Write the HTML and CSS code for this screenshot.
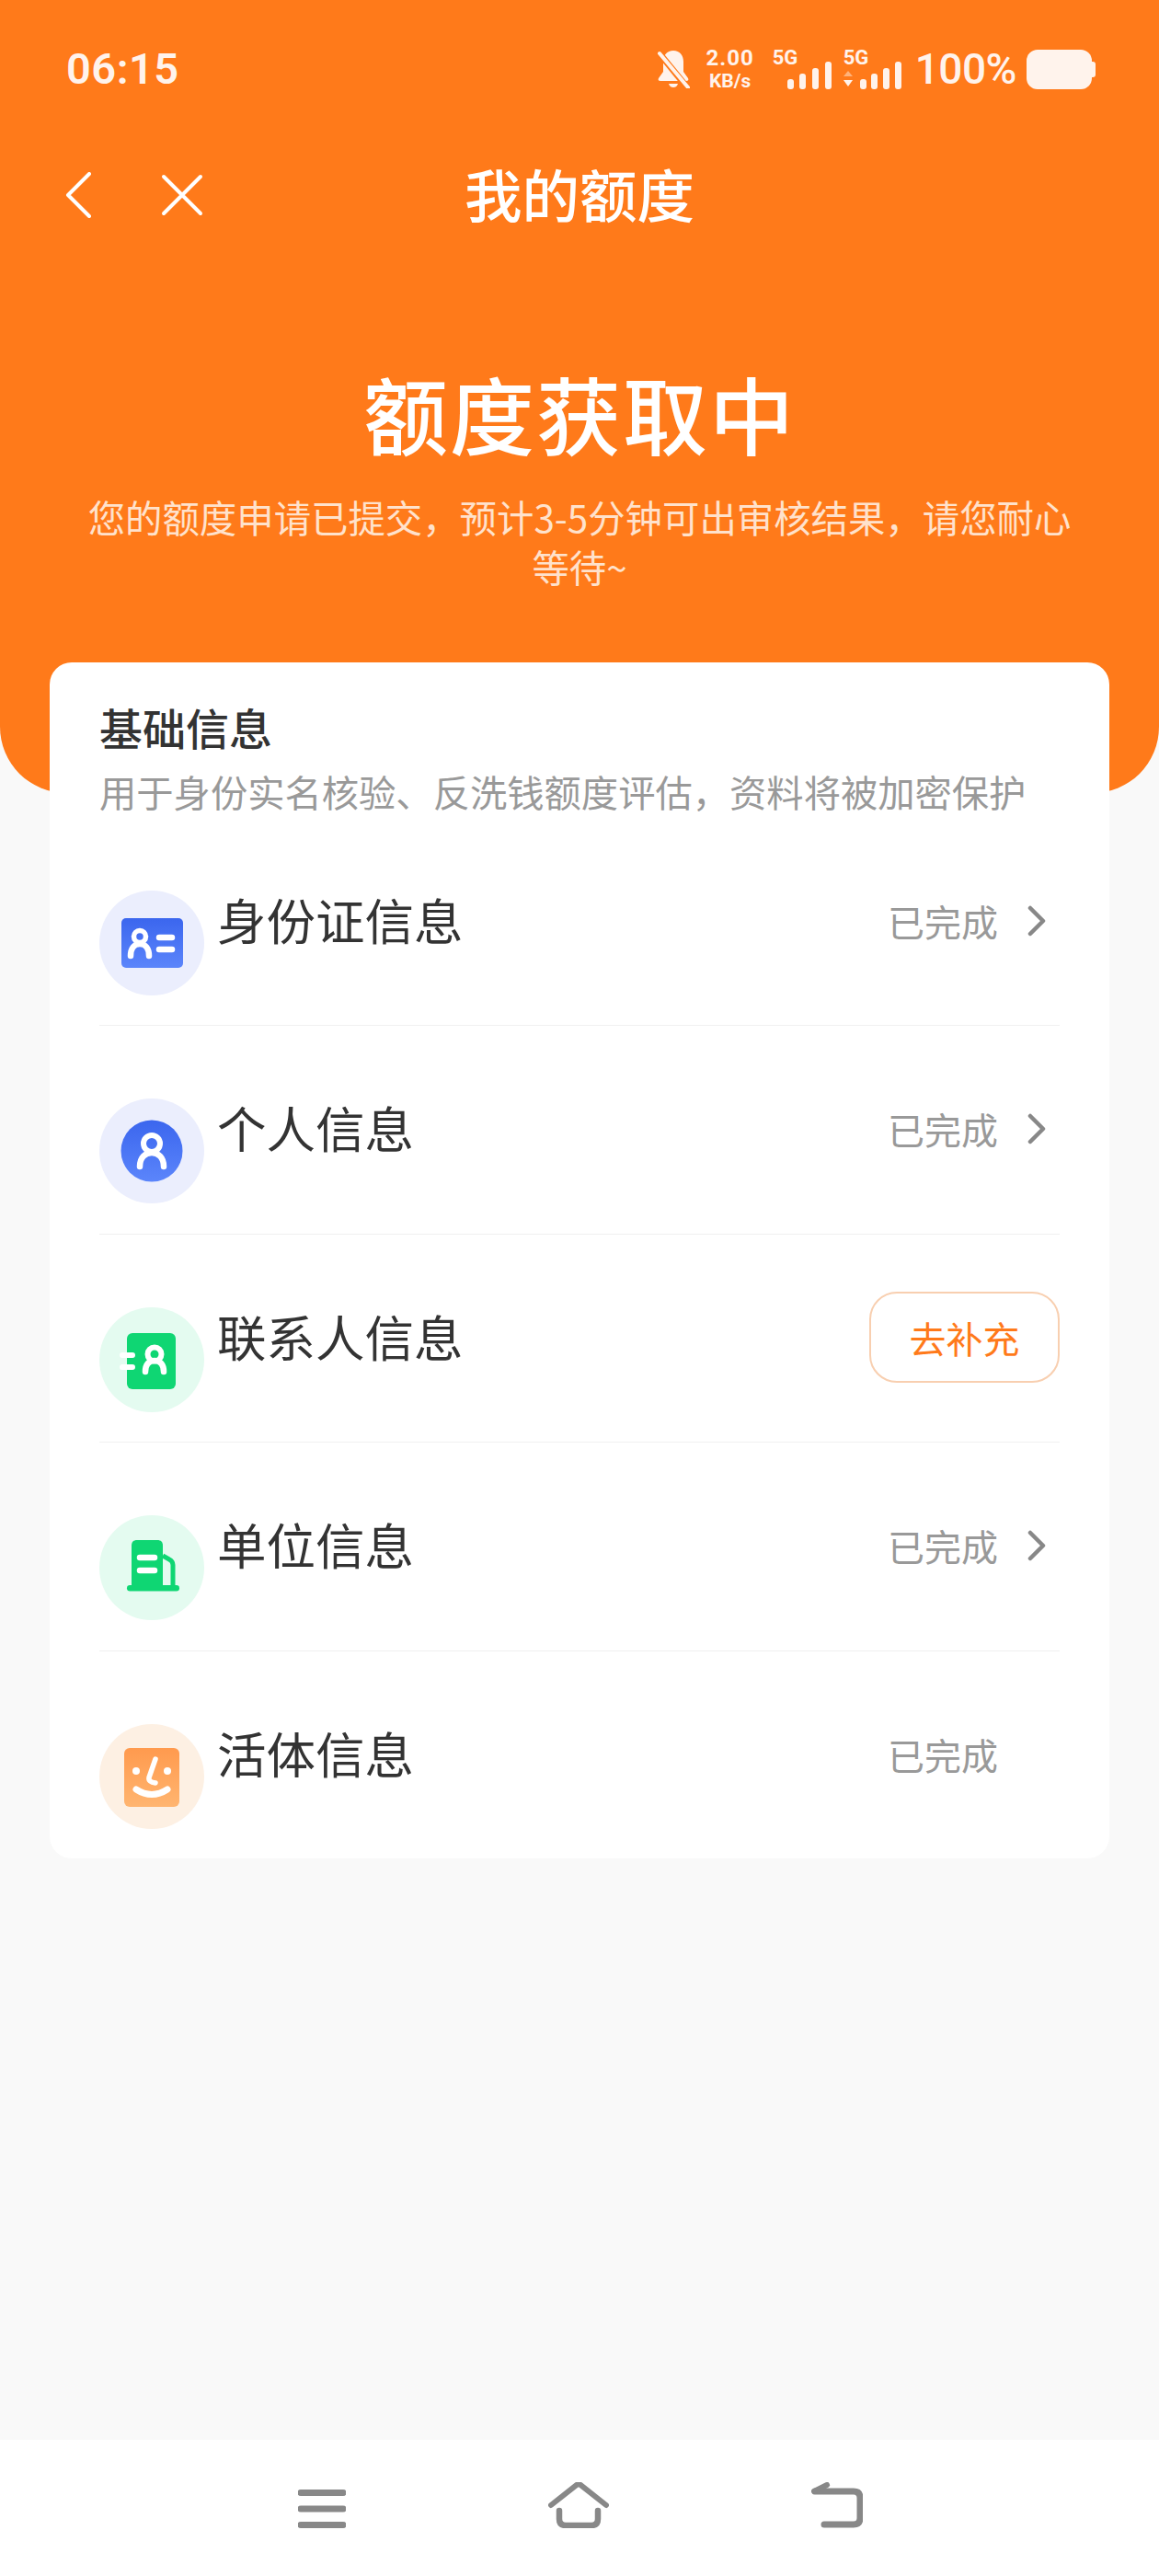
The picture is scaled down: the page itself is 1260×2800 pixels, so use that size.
FILE: index.html
```html
<!DOCTYPE html>
<html lang="zh-CN">
<head>
    <meta charset="UTF-8">
    <meta name="viewport" content="width=device-width, initial-scale=1.0">
    <title>我的额度</title>
    <link rel="stylesheet" href="styles.css">
</head>
<body>
    <div class="page">
        <header class="hero">
            <div class="status-bar">
                <span class="clock">06:15</span>
                <div class="status-icons">
                    <svg class="bell" viewBox="0 0 36 42" width="36" height="42">
                        <path d="M18 1c-7 0-11 5-11 12v11l-5 7c-1 2 0 3 2 3h28c2 0 3-1 2-3l-5-7V13C29 6 25 1 18 1z" fill="#fff3ec"/>
                        <path d="M13 37h10c-1 3-3 4-5 4s-4-1-5-4z" fill="#fff3ec"/>
                        <path d="M2 3l31 38" stroke="#ff7a1a" stroke-width="7"/>
                        <path d="M3 4l31 37" stroke="#fff3ec" stroke-width="4" stroke-linecap="round"/>
                    </svg>
                    <div class="speed"><span>2.00</span><span class="speed-unit">KB/s</span></div>
                    <div class="signal">
                        <span class="signal-label">5G</span>
                        <svg viewBox="0 0 48 30" width="48" height="30">
                            <rect x="0" y="19" width="7" height="11" rx="3" fill="#fff3ec"/>
                            <rect x="13" y="13" width="7" height="17" rx="3" fill="#fff3ec"/>
                            <rect x="27" y="7" width="7" height="23" rx="3" fill="#fff3ec"/>
                            <rect x="41" y="0" width="7" height="30" rx="3" fill="#fff3ec"/>
                        </svg>
                    </div>
                    <div class="signal signal-data">
                        <span class="signal-label">5G</span>
                        <svg viewBox="0 0 63 30" width="63" height="30">
                            <path d="M0 16l5-6 5 6z" fill="#ffb27a"/>
                            <path d="M0 20l5 7 5-7z" fill="#fff3ec"/>
                            <rect x="18" y="19" width="7" height="11" rx="3" fill="#fff3ec"/>
                            <rect x="30" y="13" width="7" height="17" rx="3" fill="#fff3ec"/>
                            <rect x="43" y="7" width="7" height="23" rx="3" fill="#fff3ec"/>
                            <rect x="56" y="0" width="7" height="30" rx="3" fill="#fff3ec"/>
                        </svg>
                    </div>
                    <span class="battery-text">100%</span>
                    <div class="battery"></div>
                </div>
            </div>

            <nav class="title-bar">
                <svg class="nav-icon nav-back" viewBox="0 0 30 50" width="30" height="50">
                    <path d="M27 2L4 25l23 23" fill="none" stroke="#fff" stroke-width="4" stroke-linecap="round" stroke-linejoin="round"/>
                </svg>
                <svg class="nav-icon nav-close" viewBox="0 0 46 46" width="46" height="46">
                    <path d="M3 3l40 40M43 3L3 43" fill="none" stroke="#fff" stroke-width="4" stroke-linecap="round"/>
                </svg>
                <h1 class="title-bar-text">我的额度</h1>
            </nav>

            <div class="hero-text">
                <h2>额度获取中</h2>
                <p>您的额度申请已提交，预计3-5分钟可出审核结果，请您耐心<br>等待~</p>
            </div>
        </header>

        <main class="card">
            <h3>基础信息</h3>
            <p class="card-sub">用于身份实名核验、反洗钱额度评估，资料将被加密保护</p>

            <div class="row">
                <svg class="row-icon" viewBox="0 0 114 114" width="114" height="114">
                    <defs>
                        <linearGradient id="blue" x1="0" y1="0" x2="0" y2="1">
                            <stop offset="0" stop-color="#3b66ee"/>
                            <stop offset="1" stop-color="#5b85fb"/>
                        </linearGradient>
                        <linearGradient id="peach" x1="0" y1="0" x2="0" y2="1">
                            <stop offset="0" stop-color="#ff9a4e"/>
                            <stop offset="1" stop-color="#ffb570"/>
                        </linearGradient>
                    </defs>
                    <circle cx="57" cy="57" r="57" fill="#ebeefd"/>
                    <rect x="24" y="30" width="67" height="54" rx="5" fill="url(#blue)"/>
                    <circle cx="44" cy="50" r="6.5" fill="none" stroke="#fff" stroke-width="5.5"/>
                    <path d="M34 71c0-8 4-13 10-13s10 5 10 13" fill="none" stroke="#fff" stroke-width="6.5" stroke-linecap="round"/>
                    <path d="M65 51h14M65 64h14" stroke="#fff" stroke-width="6.5" stroke-linecap="round"/>
                </svg>
                <span class="row-title">身份证信息</span>
                <div class="row-end">
                    <span class="row-status">已完成</span>
                    <svg class="chevron" viewBox="0 0 20 34" width="20" height="34"><path d="M3 3l14 14L3 31" fill="none" stroke="#888" stroke-width="4.5" stroke-linecap="round" stroke-linejoin="round"/></svg>
                </div>
            </div>

            <div class="row">
                <svg class="row-icon" viewBox="0 0 114 114" width="114" height="114">
                    <circle cx="57" cy="57" r="57" fill="#ebeefd"/>
                    <circle cx="57" cy="57" r="33.5" fill="url(#blue)"/>
                    <circle cx="57" cy="49" r="9" fill="none" stroke="#fff" stroke-width="6"/>
                    <path d="M44 74c0-10 6-15 13-15s13 5 13 15" fill="none" stroke="#fff" stroke-width="6.5" stroke-linecap="round"/>
                </svg>
                <span class="row-title">个人信息</span>
                <div class="row-end">
                    <span class="row-status">已完成</span>
                    <svg class="chevron" viewBox="0 0 20 34" width="20" height="34"><path d="M3 3l14 14L3 31" fill="none" stroke="#888" stroke-width="4.5" stroke-linecap="round" stroke-linejoin="round"/></svg>
                </div>
            </div>

            <div class="row">
                <svg class="row-icon" viewBox="0 0 114 114" width="114" height="114">
                    <circle cx="57" cy="57" r="57" fill="#e4fbf0"/>
                    <rect x="30" y="28" width="53" height="61" rx="6" fill="#0fd673"/>
                    <path d="M25 52h11M25 65h11" stroke="#fff" stroke-width="6" stroke-linecap="round"/>
                    <circle cx="60" cy="51" r="7.5" fill="none" stroke="#fff" stroke-width="6"/>
                    <path d="M50 70c0-8 4-12 10-12s10 4 10 12" fill="none" stroke="#fff" stroke-width="6.5" stroke-linecap="round"/>
                </svg>
                <span class="row-title">联系人信息</span>
                <div class="row-end">
                    <button class="fill-btn" type="button">去补充</button>
                </div>
            </div>

            <div class="row">
                <svg class="row-icon" viewBox="0 0 114 114" width="114" height="114">
                    <circle cx="57" cy="57" r="57" fill="#e4fbf0"/>
                    <path d="M35 77V33c0-4 2-6 6-6h22c4 0 6 2 6 6v44z" fill="#0fd673"/>
                    <rect x="30" y="76" width="57" height="6.5" rx="3.2" fill="#0fd673"/>
                    <path d="M44 46h16M44 60h16" stroke="#fff" stroke-width="6.5" stroke-linecap="round"/>
                    <path d="M69 44l7 4q4 2 4 6v23" fill="none" stroke="#0fd673" stroke-width="5"/>
                </svg>
                <span class="row-title">单位信息</span>
                <div class="row-end">
                    <span class="row-status">已完成</span>
                    <svg class="chevron" viewBox="0 0 20 34" width="20" height="34"><path d="M3 3l14 14L3 31" fill="none" stroke="#888" stroke-width="4.5" stroke-linecap="round" stroke-linejoin="round"/></svg>
                </div>
            </div>

            <div class="row">
                <svg class="row-icon" viewBox="0 0 114 114" width="114" height="114">
                    <circle cx="57" cy="57" r="57" fill="#fdf0e3"/>
                    <rect x="27" y="26" width="60" height="64" rx="6" fill="url(#peach)"/>
                    <circle cx="40" cy="51" r="4" fill="#fff"/>
                    <circle cx="74" cy="51" r="4" fill="#fff"/>
                    <path d="M61 38l-7 20q-1 5 7 6" fill="none" stroke="#fff" stroke-width="5.5" stroke-linecap="round"/>
                    <path d="M40 71q17 11 34 0" fill="none" stroke="#fff" stroke-width="7" stroke-linecap="round"/>
                </svg>
                <span class="row-title">活体信息</span>
                <div class="row-end">
                    <span class="row-status">已完成</span>
                    <span class="chevron-gap"></span>
                </div>
            </div>
        </main>

        <footer class="nav-bar">
            <svg class="nav-menu" viewBox="0 0 52 42" width="52" height="42">
                <path d="M3 3.500h46M3 21h46M3 38.500h46" stroke="#888" stroke-width="7" stroke-linecap="round"/>
            </svg>
            <svg viewBox="0 0 66 50" width="66" height="50">
                <path d="M3 25L31 3q2-1.500 4 0l28 22" fill="none" stroke="#888" stroke-width="6" stroke-linecap="round"/>
                <path d="M12 31v9q0 7 7 7h28q7 0 7-7v-9" fill="none" stroke="#888" stroke-width="6.500" stroke-linecap="round"/>
            </svg>
            <svg viewBox="0 0 56 50" width="56" height="50">
                <path d="M14 46h32q7 0 7-7V17q0-7-7-7H4" fill="none" stroke="#888" stroke-width="7" stroke-linecap="round"/>
                <path d="M3 10l14-7" fill="none" stroke="#888" stroke-width="6" stroke-linecap="round"/>
            </svg>
        </footer>
    </div>
</body>
</html>
```

FILE: styles.css
```css
* {
    box-sizing: border-box;
}
body {
    margin: 0;
    background-color: #f9f9f9;
    font-family: "Noto Sans CJK SC", "Noto Sans", sans-serif;
}
h1, h2, h3, p {
    margin: 0;
}
.page {
    display: flex;
    flex-direction: column;
    min-height: 2800px;
}

/* orange top area */
.hero {
    height: 862px;
    padding: 0 72px;
    background-color: #ff7a1a;
    border-radius: 0 0 72px 72px;
    color: #fff;
}
.status-bar {
    display: flex;
    align-items: center;
    justify-content: space-between;
    height: 150px;
    margin-right: 1px;
    font-family: Roboto, sans-serif;
}
.clock {
    font-size: 47px;
    font-weight: 600;
    line-height: 50px;
    letter-spacing: 0.5px;
    color: #fff3ec;
}
.status-icons {
    display: flex;
    align-items: center;
    height: 44px;
    color: #fff3ec;
}
.bell {
    margin-right: 18px;
}
.speed {
    display: flex;
    flex-direction: column;
    align-items: center;
    width: 52px;
    margin-right: 20px;
    font-size: 24px;
    font-weight: 700;
    line-height: 26px;
    letter-spacing: 1px;
}
.speed-unit {
    font-size: 21px;
    line-height: 24px;
    letter-spacing: 0;
}
.signal {
    position: relative;
    width: 64px;
    height: 44px;
    margin-right: 13px;
}
.signal-data {
    width: 63px;
    margin-right: 15px;
}
.signal svg {
    position: absolute;
    right: 0;
    bottom: 0;
}
.signal-label {
    position: absolute;
    left: 0;
    top: -2px;
    font-size: 22px;
    font-weight: 700;
    line-height: 24px;
}
.battery-text {
    margin-right: 11px;
    font-size: 46px;
    font-weight: 500;
    line-height: 50px;
    letter-spacing: -0.5px;
}
.battery {
    position: relative;
    width: 71px;
    height: 43px;
    background-color: #fff3ec;
    border-radius: 12px;
}
.battery::after {
    content: "";
    position: absolute;
    right: -4px;
    top: 13px;
    width: 4px;
    height: 17px;
    background-color: #fff3ec;
    border-radius: 0 3px 3px 0;
}
.title-bar {
    position: relative;
    display: flex;
    align-items: center;
    height: 124px;
}
.nav-back {
    margin-left: -2px;
}
.nav-close {
    margin-left: 75px;
}
.title-bar-text {
    position: absolute;
    left: 0;
    right: 0;
    top: 20px;
    text-align: center;
    font-size: 62.5px;
    font-weight: 500;
    line-height: 80px;
}
.hero-text {
    padding-top: 109px;
    text-align: center;
    margin: 0 -30px;
}
.hero-text h2 {
    font-size: 92px;
    font-weight: 500;
    line-height: 130px;
    letter-spacing: 2px;
}
.hero-text p {
    margin-top: 22px;
    font-size: 40.4px;
    line-height: 54px;
    color: #ffe2cc;
}

/* white info card */
.card {
    position: relative;
    width: 1152px;
    height: 1300px;
    margin: -142px 0 0 54px;
    padding: 40px 54px 0;
    background-color: #fff;
    border-radius: 24px;
}
.card h3 {
    font-size: 47px;
    font-weight: 500;
    line-height: 60px;
    color: #333;
}
.card-sub {
    margin-top: 11px;
    font-size: 40.3px;
    line-height: 58px;
    color: #999;
}
.row {
    display: flex;
    align-items: flex-start;
    height: 226.4px;
    border-bottom: 1px solid #f0f0f0;
}
.row:last-of-type {
    border-bottom: none;
}
.row-icon {
    flex: none;
    margin-top: 79px;
}
.row-title {
    margin: 80px 0 0 14px;
    font-size: 53.5px;
    line-height: 60px;
    color: #333;
}
.row-end {
    display: flex;
    align-items: center;
    height: 60px;
    margin: 82px 0 0 auto;
}
.row-status {
    font-size: 40px;
    color: #999;
}
.chevron {
    margin: 0 15px 0 32px;
}
.chevron-gap {
    width: 67px;
}
.fill-btn {
    width: 207px;
    height: 99px;
    padding: 0;
    background-color: #fff;
    border: 2px solid #f8cfb0;
    border-radius: 30px;
    font-family: inherit;
    font-size: 40px;
    color: #ff7a1a;
}

/* system navigation */
.nav-bar {
    display: flex;
    align-items: flex-start;
    justify-content: space-between;
    height: 148px;
    margin-top: auto;
    padding: 46px 322px 0 324px;
    background-color: #fff;
}
.nav-menu {
    margin-top: 8px;
}
```
